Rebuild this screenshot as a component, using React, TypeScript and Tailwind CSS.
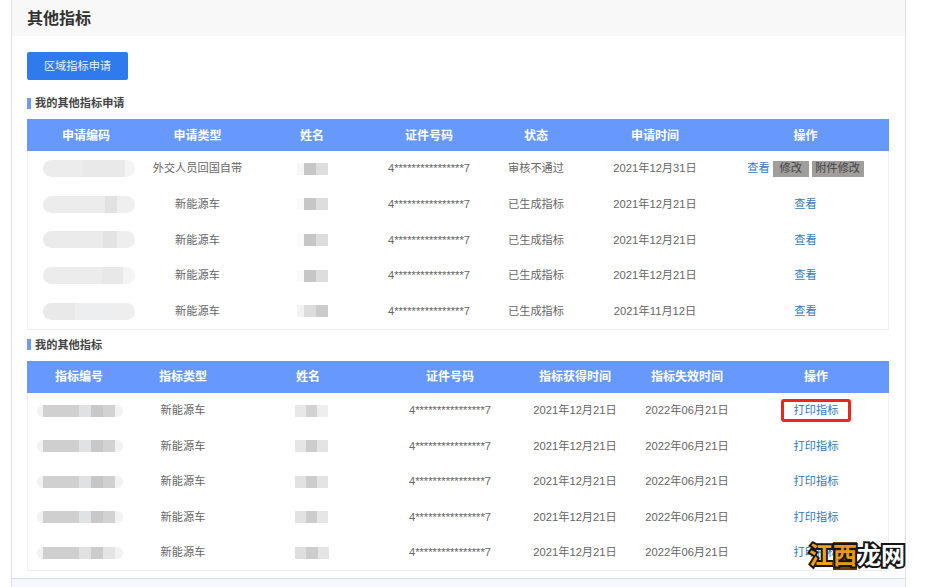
const APPLY_COLS = 'grid grid-cols-[118px_105px_124px_110px_104px_134px_167px]';
const QUOTA_COLS = 'grid grid-cols-[104px_104px_146px_138px_112px_112px_146px]';
const ID_NO = '4****************7';

// 打码块：每行的色块都略有不同
const APPLY_CODES = [
  ['w-[40px] bg-[#ececec]', 'w-[42px] bg-[#e9e9e9]', 'w-[10px] bg-[#f4f4f4]'],
  ['w-[62px] bg-[#ececec]', 'w-[12px] bg-[#e2e2e2]', 'w-[18px] bg-[#efefef]'],
  ['w-[60px] bg-[#ebebeb]', 'w-[14px] bg-[#e3e3e3]', 'w-[18px] bg-[#eeeeee]'],
  ['w-[60px] bg-[#ececec]', 'w-[22px] bg-[#e8e8e8]', 'w-[12px] bg-[#f4f4f4]'],
  ['w-[32px] bg-[#e9e9e9]', 'w-[40px] bg-[#eceef0]', 'w-[20px] bg-[#eeeeee]'],
];

const APPLY_NAMES = [
  ['w-[7px] bg-[#f6f6f6]', 'w-[12px] bg-[#c6c6c6]', 'w-[12px] bg-[#dddddd]'],
  ['w-[7px] bg-[#fafafa]', 'w-[12px] bg-[#c6c6c6]', 'w-[12px] bg-[#dddddd]'],
  ['w-[7px] bg-[#fafafa]', 'w-[12px] bg-[#c6c6c6]', 'w-[12px] bg-[#dddddd]'],
  ['w-[7px] bg-[#fafafa]', 'w-[12px] bg-[#c6c6c6]', 'w-[12px] bg-[#dddddd]'],
  ['w-[7px] bg-[#f2f2f2]', 'w-[12px] bg-[#dcdcdc]', 'w-[12px] bg-[#cbcbcb]'],
];

const QUOTA_CODES = [
  ['w-[6px] bg-[#f2f2f2]', 'w-[36px] bg-[#d0d0d0]', 'w-[12px] bg-[#dfe1e2]', 'w-[12px] bg-[#c8c8c8]', 'w-[12px] bg-[#d2d2d2]', 'w-[8px] bg-[#f2f2f2]'],
  ['w-[6px] bg-[#f2f2f2]', 'w-[36px] bg-[#cfcfcf]', 'w-[12px] bg-[#e0e2e3]', 'w-[12px] bg-[#c8c8c8]', 'w-[12px] bg-[#d2d2d2]', 'w-[8px] bg-[#f2f2f2]'],
  ['w-[6px] bg-[#f2f2f2]', 'w-[36px] bg-[#d0d0d0]', 'w-[12px] bg-[#dfe1e2]', 'w-[12px] bg-[#c6c6c6]', 'w-[12px] bg-[#d0d0d0]', 'w-[8px] bg-[#f2f2f2]'],
  ['w-[6px] bg-[#f2f2f2]', 'w-[36px] bg-[#cfcfcf]', 'w-[12px] bg-[#e0e3e4]', 'w-[12px] bg-[#c8c8c8]', 'w-[12px] bg-[#d2d2d2]', 'w-[8px] bg-[#f2f2f2]'],
  ['w-[6px] bg-[#f2f2f2]', 'w-[36px] bg-[#cfcfcf]', 'w-[12px] bg-[#dfe1e2]', 'w-[12px] bg-[#cccccc]', 'w-[12px] bg-[#e4e4e4]', 'w-[8px] bg-[#f2f2f2]'],
];

const QUOTA_NAMES = [
  ['w-[11px] bg-[#e8e8e8]', 'w-[11px] bg-[#d2d2d2]', 'w-[11px] bg-[#eeeeee]'],
  ['w-[11px] bg-[#e6e6e6]', 'w-[11px] bg-[#cccccc]', 'w-[11px] bg-[#e4e4e4]'],
  ['w-[11px] bg-[#e2e2e2]', 'w-[11px] bg-[#cccccc]', 'w-[11px] bg-[#e4e4e4]'],
  ['w-[11px] bg-[#e2e2e2]', 'w-[11px] bg-[#cccccc]', 'w-[11px] bg-[#e6e6e6]'],
  ['w-[12px] bg-[#dedede]', 'w-[12px] bg-[#cccccc]', 'w-[12px] bg-[#e4e4e4]'],
];

const APPLY_ROWS = [
  { type: '外交人员回国自带', status: '审核不通过', date: '2021年12月31日' },
  { type: '新能源车', status: '已生成指标', date: '2021年12月21日' },
  { type: '新能源车', status: '已生成指标', date: '2021年12月21日' },
  { type: '新能源车', status: '已生成指标', date: '2021年12月21日' },
  { type: '新能源车', status: '已生成指标', date: '2021年11月12日' },
];

const Mosaic = ({ parts, className }: { parts: string[]; className: string }) => (
  <div className={`flex overflow-hidden blur-[0.7px] ${className}`}>
    {parts.map((part, i) => (
      <div key={i} className={`h-full ${part}`} />
    ))}
  </div>
);

const SectionTitle = ({ children, className }: { children: string; className: string }) => (
  <div className={`flex h-[16px] items-center gap-[4px] ${className}`}>
    <span className="h-[11px] w-[4px] bg-[#6d9cf5]" />
    <h2 className="text-[11.2px] font-bold text-[#444]">{children}</h2>
  </div>
);

const HeaderRow = ({ cols, labels }: { cols: string; labels: string[] }) => (
  <div className={`${cols} h-[32px] items-center bg-[#6699fb] pt-[1px] text-center text-[12px] font-bold text-white`}>
    {labels.map((label) => (
      <span key={label}>{label}</span>
    ))}
  </div>
);

const Watermark = () => (
  <div className="absolute left-[809px] top-[542px] flex text-[24px] leading-[28px] font-bold [-webkit-text-stroke:4px_#161616] [paint-order:stroke_fill]">
    <span className="text-[#f2a019]">江</span>
    <span className="bg-[#6b4310] text-[#e8981c]">西</span>
    <span className="text-white">龙网</span>
  </div>
);

export default function App() {
  return (
    <div className="relative h-[587px] w-[942px] overflow-hidden bg-white font-['Liberation_Sans','Noto_Sans_CJK_SC',sans-serif] text-[11.2px] text-[#666]">
      <div className="ml-[11px] h-full w-[895px] border-x border-[#e0e0e0]">
        <div className="flex h-[36px] items-center bg-[#f8f8f8] pl-[15px] pt-[1px] text-[16px] font-bold text-[#333]">
          其他指标
        </div>

        <div className="pl-[15px]">
          <button
            type="button"
            className="mt-[16px] flex h-[28px] w-[101px] items-center justify-center rounded-[2px] bg-[#2f7bee] text-[#eaf2ff]"
          >
            区域指标申请
          </button>

          {/* 我的其他指标申请 */}
          <SectionTitle className="mb-[8px] mt-[15px]">我的其他指标申请</SectionTitle>
          <div className="w-[862px] border-b border-[#eeeeee]">
            <HeaderRow cols={APPLY_COLS} labels={['申请编码', '申请类型', '姓名', '证件号码', '状态', '申请时间', '操作']} />
            {APPLY_ROWS.map((row, i) => (
              <div
                key={i}
                className={`${APPLY_COLS} h-[35.6px] items-center text-center shadow-[inset_1px_0_#f0f0f0,inset_-1px_0_#f0f0f0]`}
              >
                <Mosaic parts={APPLY_CODES[i]} className="ml-[16px] h-[17px] w-[92px] rounded-full" />
                <span>{row.type}</span>
                <Mosaic parts={APPLY_NAMES[i]} className="ml-[47px] h-[12px] w-[31px]" />
                <span>{ID_NO}</span>
                <span>{row.status}</span>
                <span>{row.date}</span>
                {i === 0 ? (
                  <div className="flex items-center justify-center gap-[3px]">
                    <a className="text-[#2f7ac3]">查看</a>
                    <span className="flex h-[16px] w-[36px] items-center justify-center bg-[#a19d9d] text-[#444]">修改</span>
                    <span className="flex h-[16px] w-[52px] items-center justify-center bg-[#a19d9d] text-[#444]">附件修改</span>
                  </div>
                ) : (
                  <a className="text-[#2f7ac3]">查看</a>
                )}
              </div>
            ))}
          </div>

          {/* 我的其他指标 */}
          <SectionTitle className="mb-[8px] mt-[7px]">我的其他指标</SectionTitle>
          <div className="w-[862px] border-b border-[#eeeeee]">
            <HeaderRow cols={QUOTA_COLS} labels={['指标编号', '指标类型', '姓名', '证件号码', '指标获得时间', '指标失效时间', '操作']} />
            {QUOTA_CODES.map((code, i) => (
              <div
                key={i}
                className={`${QUOTA_COLS} h-[35.5px] items-center text-center shadow-[inset_1px_0_#f0f0f0,inset_-1px_0_#f0f0f0]`}
              >
                <Mosaic parts={code} className="ml-[10px] h-[12px] w-[86px] rounded-full" />
                <span>新能源车</span>
                <Mosaic parts={QUOTA_NAMES[i]} className="ml-[60px] h-[12px] w-[34px]" />
                <span>{ID_NO}</span>
                <span>2021年12月21日</span>
                <span>2022年06月21日</span>
                {i === 0 ? (
                  <a className="mx-auto flex h-[23px] w-[70px] items-center justify-center rounded-[3px] border-[3px] border-[#e8281c] text-[#2f7ac3]">
                    打印指标
                  </a>
                ) : (
                  <a className="text-[#2f7ac3]">打印指标</a>
                )}
              </div>
            ))}
          </div>
        </div>

        <div className="mt-[7px] h-[12px] border-t border-[#d5dde8] bg-[#f5f8fc]" />
      </div>
      <Watermark />
    </div>
  );
}
